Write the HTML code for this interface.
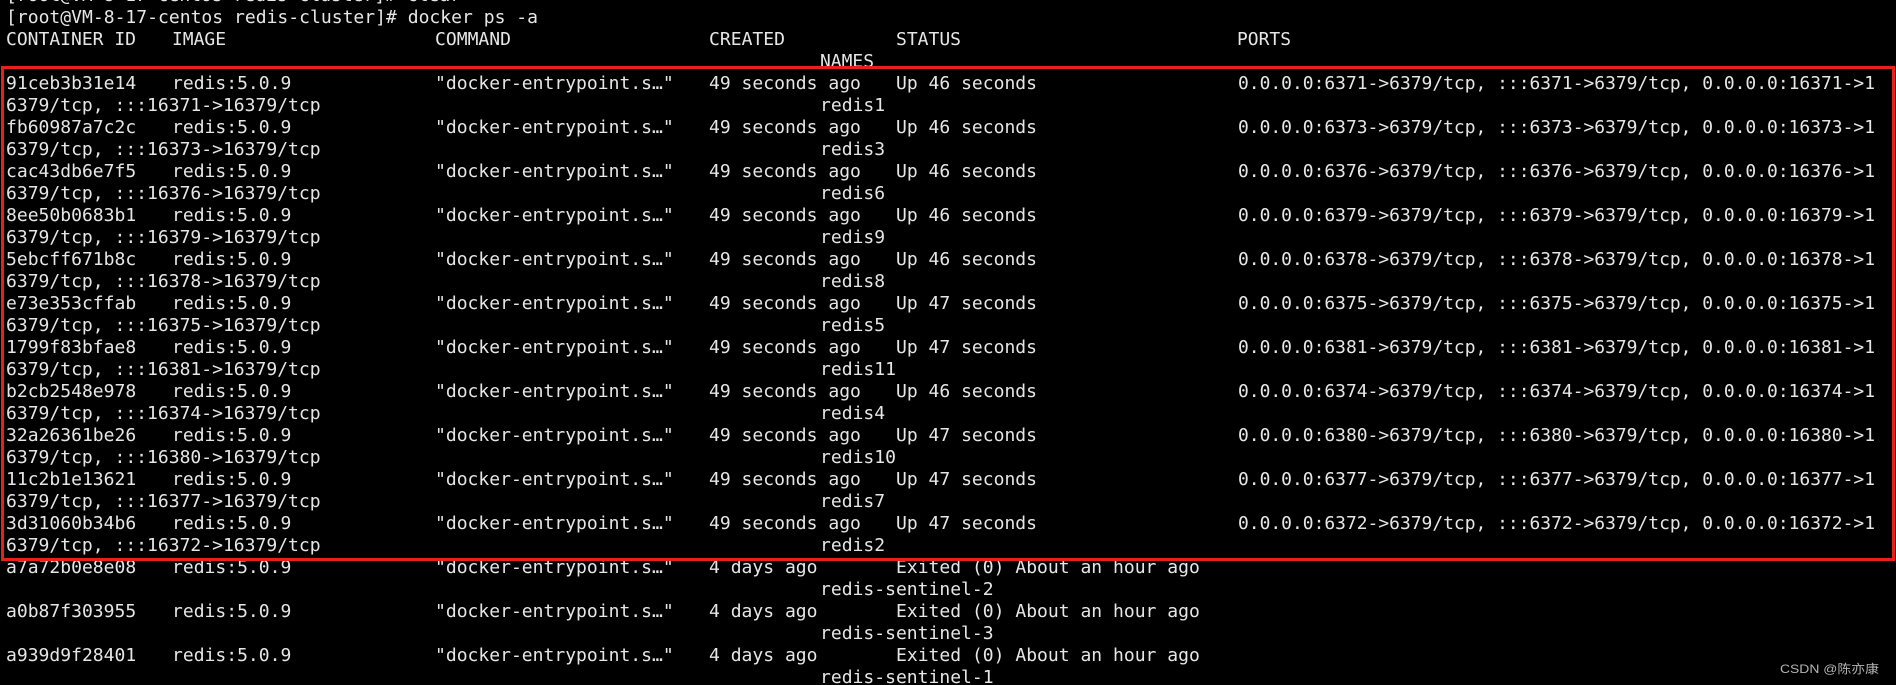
<!DOCTYPE html>
<html><head><meta charset="utf-8"><style>
html,body{margin:0;padding:0;background:#000;width:1896px;height:685px;overflow:hidden}
svg{display:block}
text{font-family:"DejaVu Sans Mono","Liberation Mono",monospace;font-size:17.5px;fill:#e6e6e6;white-space:pre}
</style></head><body>
<svg width="1896" height="685" viewBox="0 0 1896 685" xmlns="http://www.w3.org/2000/svg">
<rect width="1896" height="685" fill="#000"/>
<text x="6" y="1" textLength="455" lengthAdjust="spacingAndGlyphs">[root@VM-8-17-centos redis-cluster]# clear</text>
<text x="6" y="23" textLength="532" lengthAdjust="spacingAndGlyphs">[root@VM-8-17-centos redis-cluster]# docker ps -a</text>
<text x="6" y="45" textLength="130" lengthAdjust="spacingAndGlyphs">CONTAINER ID</text>
<text x="172" y="45" textLength="54" lengthAdjust="spacingAndGlyphs">IMAGE</text>
<text x="435" y="45" textLength="76" lengthAdjust="spacingAndGlyphs">COMMAND</text>
<text x="709" y="45" textLength="76" lengthAdjust="spacingAndGlyphs">CREATED</text>
<text x="896" y="45" textLength="65" lengthAdjust="spacingAndGlyphs">STATUS</text>
<text x="1237" y="45" textLength="54" lengthAdjust="spacingAndGlyphs">PORTS</text>
<text x="820" y="67" textLength="54" lengthAdjust="spacingAndGlyphs">NAMES</text>
<g id="rows"></g>
<rect x="2.5" y="67.5" width="1891" height="492" fill="none" stroke="#e8201c" stroke-width="3"/>
<text x="1780" y="673" textLength="99" lengthAdjust="spacingAndGlyphs" style="font-family:'Liberation Sans','Noto Sans CJK SC',sans-serif;font-size:12px;fill:#b4b4b4">CSDN @陈亦康</text>
</svg>
<script>
var rows=[["91ceb3b31e14","46","6371","redis1"],["fb60987a7c2c","46","6373","redis3"],["cac43db6e7f5","46","6376","redis6"],["8ee50b0683b1","46","6379","redis9"],["5ebcff671b8c","46","6378","redis8"],["e73e353cffab","47","6375","redis5"],["1799f83bfae8","47","6381","redis11"],["b2cb2548e978","46","6374","redis4"],["32a26361be26","47","6380","redis10"],["11c2b1e13621","47","6377","redis7"],["3d31060b34b6","47","6372","redis2"],
["a7a72b0e8e08","","","redis-sentinel-2"],["a0b87f303955","","","redis-sentinel-3"],["a939d9f28401","","","redis-sentinel-1"]];
var g=document.getElementById("rows"),ns="http://www.w3.org/2000/svg",cw=10.85;
function t(x,y,s){var e=document.createElementNS(ns,"text");e.setAttribute("x",x);e.setAttribute("y",y);e.setAttribute("textLength",(s.length*cw).toFixed(1));e.setAttribute("lengthAdjust","spacingAndGlyphs");e.textContent=s;g.appendChild(e);}
rows.forEach(function(r,i){var y=89+i*44;
t(6,y,r[0]);t(172,y,"redis:5.0.9");t(435,y,'"docker-entrypoint.s\u2026"');
if(r[1]){t(709,y,"49 seconds ago");t(896,y,"Up "+r[1]+" seconds");
var p=r[2],q="1"+p;
var s="0.0.0.0:"+p+"->6379/tcp, :::"+p+"->6379/tcp, 0.0.0.0:"+q+"->1";
var e=document.createElementNS(ns,"text");e.setAttribute("x",1238);e.setAttribute("y",y);e.setAttribute("textLength","637");e.setAttribute("lengthAdjust","spacingAndGlyphs");e.textContent=s;g.appendChild(e);
t(6,y+22,"6379/tcp, :::"+q+"->16379/tcp");}
else{t(709,y,"4 days ago");t(896,y,"Exited (0) About an hour ago");}
t(820,y+22,r[3]);});
</script>
</body></html>
